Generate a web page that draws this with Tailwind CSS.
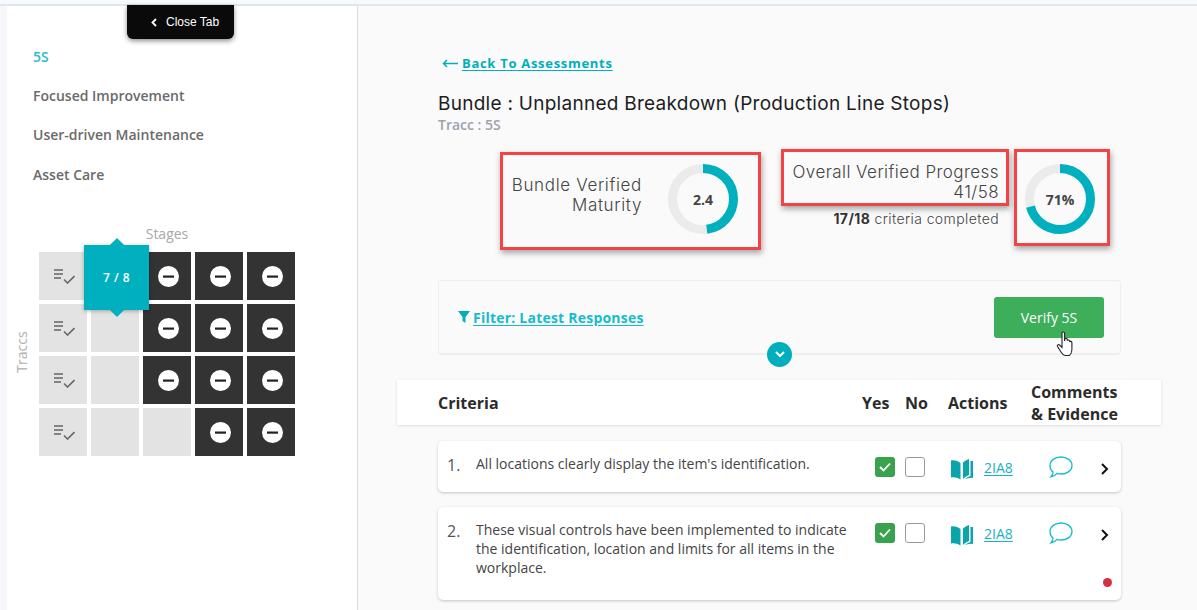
<!DOCTYPE html>
<html lang="en">
<head>
<meta charset="UTF-8">
<title>Bundle Assessment</title>
<script src="https://cdn.jsdelivr.net/npm/@tailwindcss/browser@4"></script>
</head>
<body class="bg-[#fafafa] font-['Open_Sans',sans-serif] text-[#333] overflow-hidden">
<div class="h-[610px] w-[1197px] overflow-hidden flex flex-col">
  <div class="h-[6px] shrink-0 bg-[#f8f9fb] border-b-2 border-b-[#dbe9f3]"></div>
  <div class="flex flex-1 min-h-0">

    <!-- sidebar -->
    <aside class="relative w-[358px] shrink-0 border-l-[7px] border-l-[#f5f7fa] border-r border-r-[#dcdcdc] bg-white">
      <div class="absolute left-[120px] -top-px w-[107px] h-[34px] bg-[#0a0a0a] rounded-b-md shadow-[0_2px_5px_rgba(0,0,0,0.45)] flex items-center gap-[9px] pl-[24px] text-white text-[12px] font-['Liberation_Sans',sans-serif]">
        <svg width="6" height="9" viewBox="0 0 6 9" fill="none" stroke="white" stroke-width="1.8"><path d="M5 1 1.5 4.5 5 8"/></svg>
        <span>Close Tab</span>
      </div>
      <ul class="pt-[40.5px] pl-[26px] text-[14px] font-semibold text-[#6a6a6a] flex flex-col gap-[19.4px] leading-[20px]">
        <li class="text-[#2bbccb]">5S</li>
        <li>Focused Improvement</li>
        <li>User-driven Maintenance</li>
        <li>Asset Care</li>
      </ul>

      <div class="relative mt-[39.7px] ml-[32px] w-[256px]">
        <div class="text-center text-[14px] leading-[20px] text-[#a8a8a8] mb-[8px]">Stages</div>
        <div class="absolute -left-[47px] top-[118px] w-[60px] text-center -rotate-90 text-[14px] leading-[20px] text-[#b0b0b0]">Traccs</div>
        <div class="grid grid-cols-[repeat(5,48px)] grid-rows-[repeat(4,48px)] gap-[4px]">
          <div class="bg-[#e3e3e3] flex items-center justify-center pl-[3px]"><svg width="21" height="15" viewBox="0 0 21 15" fill="none" stroke="#666" stroke-width="1.6"><path d="M0 1h9M0 5h9M0 9h7"/><path d="M10 10.500l3.500 3.500L20.500 7"/></svg></div>
          <div class="bg-[#e3e3e3]"></div>
          <div class="bg-[#333] flex items-center justify-center pl-[2px] pt-[1px]"><svg width="21" height="21" viewBox="0 0 21 21"><circle cx="10.5" cy="10.5" r="10.5" fill="#fff"/><rect x="5" y="9.500" width="11" height="2.200" fill="#222"/></svg></div>
          <div class="bg-[#333] flex items-center justify-center pl-[2px] pt-[1px]"><svg width="21" height="21" viewBox="0 0 21 21"><circle cx="10.5" cy="10.5" r="10.5" fill="#fff"/><rect x="5" y="9.500" width="11" height="2.200" fill="#222"/></svg></div>
          <div class="bg-[#333] flex items-center justify-center pl-[2px] pt-[1px]"><svg width="21" height="21" viewBox="0 0 21 21"><circle cx="10.5" cy="10.5" r="10.5" fill="#fff"/><rect x="5" y="9.500" width="11" height="2.200" fill="#222"/></svg></div>

          <div class="bg-[#e3e3e3] flex items-center justify-center pl-[3px]"><svg width="21" height="15" viewBox="0 0 21 15" fill="none" stroke="#666" stroke-width="1.6"><path d="M0 1h9M0 5h9M0 9h7"/><path d="M10 10.500l3.500 3.500L20.500 7"/></svg></div>
          <div class="bg-[#e3e3e3]"></div>
          <div class="bg-[#333] flex items-center justify-center pl-[2px] pt-[1px]"><svg width="21" height="21" viewBox="0 0 21 21"><circle cx="10.5" cy="10.5" r="10.5" fill="#fff"/><rect x="5" y="9.500" width="11" height="2.200" fill="#222"/></svg></div>
          <div class="bg-[#333] flex items-center justify-center pl-[2px] pt-[1px]"><svg width="21" height="21" viewBox="0 0 21 21"><circle cx="10.5" cy="10.5" r="10.5" fill="#fff"/><rect x="5" y="9.500" width="11" height="2.200" fill="#222"/></svg></div>
          <div class="bg-[#333] flex items-center justify-center pl-[2px] pt-[1px]"><svg width="21" height="21" viewBox="0 0 21 21"><circle cx="10.5" cy="10.5" r="10.5" fill="#fff"/><rect x="5" y="9.500" width="11" height="2.200" fill="#222"/></svg></div>

          <div class="bg-[#e3e3e3] flex items-center justify-center pl-[3px]"><svg width="21" height="15" viewBox="0 0 21 15" fill="none" stroke="#666" stroke-width="1.6"><path d="M0 1h9M0 5h9M0 9h7"/><path d="M10 10.500l3.500 3.500L20.500 7"/></svg></div>
          <div class="bg-[#e3e3e3]"></div>
          <div class="bg-[#333] flex items-center justify-center pl-[2px] pt-[1px]"><svg width="21" height="21" viewBox="0 0 21 21"><circle cx="10.5" cy="10.5" r="10.5" fill="#fff"/><rect x="5" y="9.500" width="11" height="2.200" fill="#222"/></svg></div>
          <div class="bg-[#333] flex items-center justify-center pl-[2px] pt-[1px]"><svg width="21" height="21" viewBox="0 0 21 21"><circle cx="10.5" cy="10.5" r="10.5" fill="#fff"/><rect x="5" y="9.500" width="11" height="2.200" fill="#222"/></svg></div>
          <div class="bg-[#333] flex items-center justify-center pl-[2px] pt-[1px]"><svg width="21" height="21" viewBox="0 0 21 21"><circle cx="10.5" cy="10.5" r="10.5" fill="#fff"/><rect x="5" y="9.500" width="11" height="2.200" fill="#222"/></svg></div>

          <div class="bg-[#e3e3e3] flex items-center justify-center pl-[3px]"><svg width="21" height="15" viewBox="0 0 21 15" fill="none" stroke="#666" stroke-width="1.6"><path d="M0 1h9M0 5h9M0 9h7"/><path d="M10 10.500l3.500 3.500L20.500 7"/></svg></div>
          <div class="bg-[#e3e3e3]"></div>
          <div class="bg-[#e3e3e3]"></div>
          <div class="bg-[#333] flex items-center justify-center pl-[2px] pt-[1px]"><svg width="21" height="21" viewBox="0 0 21 21"><circle cx="10.5" cy="10.5" r="10.5" fill="#fff"/><rect x="5" y="9.500" width="11" height="2.200" fill="#222"/></svg></div>
          <div class="bg-[#333] flex items-center justify-center pl-[2px] pt-[1px]"><svg width="21" height="21" viewBox="0 0 21 21"><circle cx="10.5" cy="10.5" r="10.5" fill="#fff"/><rect x="5" y="9.500" width="11" height="2.200" fill="#222"/></svg></div>
        </div>
        <!-- hovered stage tooltip -->
        <div class="absolute left-[45px] top-[21px] w-[65px] h-[65px] bg-[#00b0bf] shadow-[0_1px_4px_rgba(0,0,0,0.3)] flex items-center justify-center text-white text-[12px] font-semibold tracking-[0.5px]">
          <span class="absolute -top-[5px] left-[27.5px] w-[10px] h-[10px] rotate-45 bg-[#00b0bf]"></span>
          <span class="absolute -bottom-[5px] left-[27.5px] w-[10px] h-[10px] rotate-45 bg-[#00b0bf]"></span>
          <span class="relative">7 / 8</span>
        </div>
      </div>
    </aside>

    <!-- main -->
    <main class="flex-1 pl-[39px] pr-[36px]">
      <div class="pl-[41px] pr-[40px]">
        <a class="mt-[47px] ml-[4px] flex items-center gap-[4px] text-[13px] leading-[20px] font-bold text-[#00aebd] tracking-[0.7px]">
          <svg width="16" height="9" viewBox="0 0 16 9" fill="none" stroke="#00aebd" stroke-width="1.5"><path d="M16 4.500H1.500M5 1 1.500 4.500 5 8"/></svg>
          <span class="underline underline-offset-2">Back To Assessments</span>
        </a>
        <h1 class="mt-[19px] font-['Inter',sans-serif] text-[19px] leading-[24px] text-[#1d1d1f] tracking-[0.27px]">Bundle : Unplanned Breakdown (Production Line Stops)</h1>
        <p class="text-[14px] leading-[18px] font-semibold text-[#9aa3af]">Tracc : 5S</p>

        <!-- scores -->
        <div class="relative mt-[15px] h-[101px] flex justify-end items-start pr-[26px] font-['Inter',sans-serif] text-[#444]">
          <div class="absolute left-[62px] top-[3px] w-[261px] h-[98px] border-[3px] border-[#f44346] shadow-[1px_3px_6px_rgba(0,0,0,0.35)]"></div>
          <div class="absolute left-[343px] top-0 w-[228px] h-[57px] border-[3px] border-[#f44346] shadow-[1px_3px_6px_rgba(0,0,0,0.35)]"></div>
          <div class="absolute left-[576px] top-0 w-[96px] h-[97px] border-[3px] border-[#f44346] shadow-[1px_3px_6px_rgba(0,0,0,0.35)]"></div>

          <div class="flex items-start gap-[26px] mr-[51px]">
            <div class="mt-[26px] text-right text-[17px] leading-[20px] font-light w-[150px] tracking-[0.65px]">Bundle Verified<br>Maturity</div>
            <div class="relative mt-[15px] w-[70px] h-[70px]">
              <svg width="70" height="70" viewBox="0 0 70 70" class="-rotate-90"><circle cx="35" cy="35" r="30.5" fill="none" stroke="#ebebeb" stroke-width="9"/><circle cx="35" cy="35" r="30.5" fill="none" stroke="#00b0bf" stroke-width="9" pathLength="100" stroke-dasharray="48 100"/></svg>
              <div class="absolute inset-0 flex items-center justify-center font-['Open_Sans',sans-serif] text-[14px] font-bold text-[#444]">2.4</div>
            </div>
          </div>
          <div class="flex flex-col items-end w-[210px] mr-[26px] pt-[13px]">
            <div class="text-right text-[17px] leading-[20px] font-light tracking-[0.44px] whitespace-nowrap">Overall Verified Progress<br>41/58</div>
            <div class="text-[14px] leading-[18px] mt-[8px] font-light tracking-[0.4px] text-[#444] whitespace-nowrap"><b class="font-bold text-[#333]">17/18</b> criteria completed</div>
          </div>
          <div class="relative mt-[15px] w-[70px] h-[70px]">
            <svg width="70" height="70" viewBox="0 0 70 70" class="-rotate-90"><circle cx="35" cy="35" r="30.5" fill="none" stroke="#ebebeb" stroke-width="9"/><circle cx="35" cy="35" r="30.5" fill="none" stroke="#00b0bf" stroke-width="9" pathLength="100" stroke-dasharray="71 100"/></svg>
            <div class="absolute inset-0 flex items-center justify-center font-['Open_Sans',sans-serif] text-[14px] font-bold text-[#444]">71%</div>
          </div>
        </div>

        <!-- filter card -->
        <div class="relative mt-[30px] h-[75px] border border-[#efefef] border-b-2 rounded-[4px] flex items-center justify-between pl-[19px] pr-[16px]">
          <a class="flex items-center gap-[3px] text-[14px] font-bold text-[#17bccb] tracking-[0.22px]">
            <svg width="12" height="12" viewBox="0 0 12 12" fill="#00aebd"><path d="M0 0h12L7.500 6v6L4.500 10V6z"/></svg>
            <span class="underline underline-offset-2">Filter: Latest Responses</span>
          </a>
          <button class="w-[110px] h-[41px] rounded-[3px] bg-[#3dae5a] text-white text-[14px]">Verify 5S</button>
          <!-- pointer over the button -->
          <svg class="absolute left-[617px] top-[50px]" width="20" height="26" viewBox="0 0 20 26"><path d="M6 2.200c0-1.600 2.600-1.600 2.600 0V10l.3-2c.3-1.200 2.300-1 2.300.3l.1 1.400c.2-1.100 2.200-1 2.300.3l.1 1c.3-1 2.100-.8 2.200.5V18c0 3-1.500 6-3 6.500H9c-2 0-3-2-4-3.500L1.500 15.500c-.8-1.400.9-2.500 2-1.500L6 16.500z" fill="#fff" stroke="#222" stroke-width="1.100"/></svg>
          <div class="absolute left-[328px] -bottom-[14px] w-[25px] h-[25px] rounded-full bg-[#00aebd] flex items-center justify-center">
            <svg width="10" height="7" viewBox="0 0 10 7" fill="none" stroke="#fff" stroke-width="2"><path d="M1 1l4 4 4-4"/></svg>
          </div>
        </div>
      </div>

      <!-- table header -->
      <div class="mt-[25px] h-[45px] bg-white shadow-[0_1px_3px_rgba(0,0,0,0.12)] pl-[41px] flex items-center text-[16px] font-bold text-[#2b2b2b] leading-[22px]">
        <div class="w-[424px]">Criteria</div>
        <div class="w-[43px]">Yes</div>
        <div class="w-[43px]">No</div>
        <div class="w-[83px]">Actions</div>
        <div>Comments<br>&amp; Evidence</div>
      </div>

      <!-- criteria rows -->
      <div class="pl-[41px] pr-[40px] mt-[16px] flex flex-col gap-[15px]">
        <div class="relative h-[51px] bg-white rounded-[5px] shadow-[0_1px_3px_rgba(0,0,0,0.22)] flex items-start pl-[9px]">
          <div class="w-[29px] pt-[13px] text-[16px] leading-[22px] text-[#555]">1.</div>
          <div class="w-[375px] mr-[24px] pt-[13px] text-[14px] leading-[19px] text-[#444]">All locations clearly display the item's identification.</div>
          <div class="pt-[16px] flex gap-[10px]">
            <span class="w-[20px] h-[20px] rounded-[3px] bg-[#38a24f] flex items-center justify-center"><svg width="12" height="10" viewBox="0 0 12 10" fill="none" stroke="#fff" stroke-width="1.800"><path d="M1 5l3.500 3.500L11 1.500"/></svg></span>
            <span class="w-[20px] h-[20px] rounded-[3px] border border-[#9a9a9a] bg-white"></span>
          </div>
          <div class="pt-[18px] ml-[26px] flex items-start gap-[11px]">
            <svg width="22" height="21" viewBox="0 0 22 21" fill="#0aa5ab"><path d="M0 1.500c3-.5 6 0 9.500 2.500v16.500C6.500 18.500 3 18 0 18.500z"/><path d="M12 3.500C14 1.800 16.500.5 18 0v16c-2 .7-4.500 2.500-6 4z"/><path d="M19.500 2H22v17c-3-.6-6 .3-8.500 1.500 2-2 4-3 6-3.500z"/></svg>
            <span class="text-[14px] leading-[18px] text-[#17b3c2] underline underline-offset-2">2IA8</span>
          </div>
          <svg class="absolute left-[611px] top-[15px]" width="24" height="22" viewBox="0 0 24 22" fill="none" stroke="#17bccb" stroke-width="1.300"><path d="M12 1c6 0 11 3.500 11 8.500S18 18 12 18c-1.500 0-3-.2-4-.6-1 1.400-3 2.900-6 3.400 1.300-1.200 2-3 2-4.800C2 14.500 1 12 1 9.500 1 4.500 6 1 12 1z"/></svg>
          <svg class="absolute left-[662px] top-[22px]" width="9" height="12" viewBox="0 0 9 12" fill="none" stroke="#111" stroke-width="2"><path d="M2 1l5 5-5 5"/></svg>
        </div>

        <div class="relative h-[93px] bg-white rounded-[5px] shadow-[0_1px_3px_rgba(0,0,0,0.22)] flex items-start pl-[9px]">
          <div class="w-[29px] pt-[13px] text-[16px] leading-[22px] text-[#555]">2.</div>
          <div class="w-[375px] mr-[24px] pt-[13px] text-[14px] leading-[19px] text-[#444]">These visual controls have been implemented to indicate the identification, location and limits for all items in the workplace.</div>
          <div class="pt-[16px] flex gap-[10px]">
            <span class="w-[20px] h-[20px] rounded-[3px] bg-[#38a24f] flex items-center justify-center"><svg width="12" height="10" viewBox="0 0 12 10" fill="none" stroke="#fff" stroke-width="1.800"><path d="M1 5l3.500 3.500L11 1.500"/></svg></span>
            <span class="w-[20px] h-[20px] rounded-[3px] border border-[#9a9a9a] bg-white"></span>
          </div>
          <div class="pt-[18px] ml-[26px] flex items-start gap-[11px]">
            <svg width="22" height="21" viewBox="0 0 22 21" fill="#0aa5ab"><path d="M0 1.500c3-.5 6 0 9.500 2.500v16.500C6.500 18.500 3 18 0 18.500z"/><path d="M12 3.500C14 1.800 16.500.5 18 0v16c-2 .7-4.500 2.500-6 4z"/><path d="M19.500 2H22v17c-3-.6-6 .3-8.500 1.500 2-2 4-3 6-3.500z"/></svg>
            <span class="text-[14px] leading-[18px] text-[#17b3c2] underline underline-offset-2">2IA8</span>
          </div>
          <svg class="absolute left-[611px] top-[15px]" width="24" height="22" viewBox="0 0 24 22" fill="none" stroke="#17bccb" stroke-width="1.300"><path d="M12 1c6 0 11 3.500 11 8.500S18 18 12 18c-1.500 0-3-.2-4-.6-1 1.400-3 2.900-6 3.400 1.300-1.200 2-3 2-4.800C2 14.500 1 12 1 9.500 1 4.500 6 1 12 1z"/></svg>
          <svg class="absolute left-[662px] top-[22px]" width="9" height="12" viewBox="0 0 9 12" fill="none" stroke="#111" stroke-width="2"><path d="M2 1l5 5-5 5"/></svg>
          <span class="absolute left-[665px] top-[71px] w-[9px] h-[9px] rounded-full bg-[#d6303c]"></span>
        </div>
      </div>
    </main>
  </div>
</div>
</body>
</html>
